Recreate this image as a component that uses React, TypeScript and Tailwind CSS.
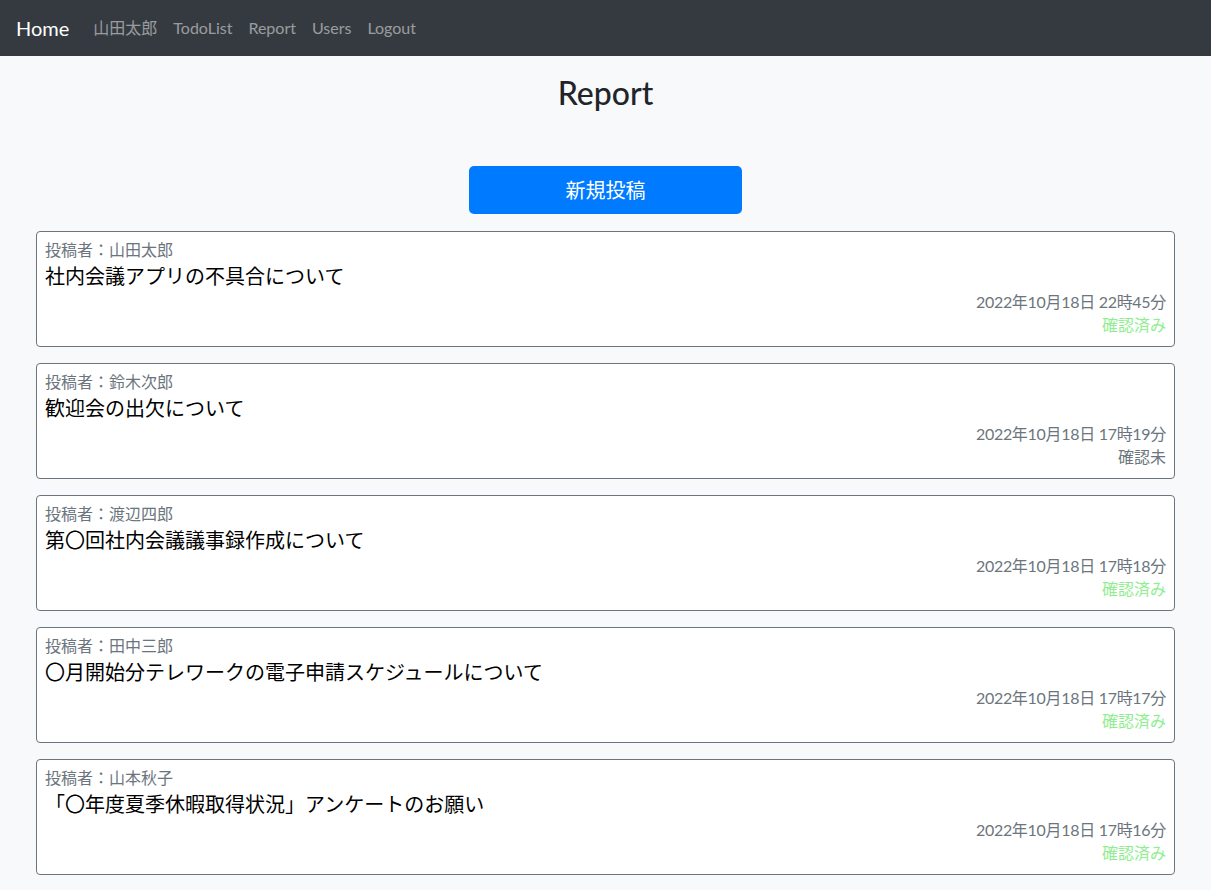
import React from "react";

const FONT = {
  fontFamily: '"Lato", "Noto Sans CJK JP", sans-serif',
};

const REPORTS = [
  {
    author: "山田太郎",
    title: "社内会議アプリの不具合について",
    date: "2022年10月18日 22時45分",
    checked: true,
  },
  {
    author: "鈴木次郎",
    title: "歓迎会の出欠について",
    date: "2022年10月18日 17時19分",
    checked: false,
  },
  {
    author: "渡辺四郎",
    title: "第〇回社内会議議事録作成について",
    date: "2022年10月18日 17時18分",
    checked: true,
  },
  {
    author: "田中三郎",
    title: "〇月開始分テレワークの電子申請スケジュールについて",
    date: "2022年10月18日 17時17分",
    checked: true,
  },
  {
    author: "山本秋子",
    title: "「〇年度夏季休暇取得状況」アンケートのお願い",
    date: "2022年10月18日 17時16分",
    checked: true,
  },
];

const NAV_LINKS = ["山田太郎", "TodoList", "Report", "Users", "Logout"];

const ReportCard = ({
  author,
  title,
  date,
  checked,
}: {
  author: string;
  title: string;
  date: string;
  checked: boolean;
}) => (
  <div className="border border-[#6c757d] rounded-[4px] bg-white px-2 pt-[6px] pb-[9px]">
    <div className="text-base leading-6 text-[#6c757d]">投稿者：{author}</div>
    <div
      className="text-[20px] leading-[28px] text-black"
      style={{ fontFamily: '"Noto Sans CJK JP", sans-serif' }}
    >
      {title}
    </div>
    <div className="text-right text-base leading-[23px] text-[#6c757d] tracking-[-0.3px]">
      {date}
    </div>
    <div
      className={
        checked
          ? "text-right text-base leading-6 text-[#90ee90]"
          : "text-right text-base leading-6 text-[#6c757d]"
      }
    >
      {checked ? "確認済み" : "確認未"}
    </div>
  </div>
);

export default function App() {
  return (
    <div className="min-h-[890px] bg-[#f8f9fa] text-[#212529]" style={FONT}>
      <nav className="h-14 bg-[#343a40] flex items-center px-4">
        <span className="text-[20px] text-white mr-4 leading-[30px]">Home</span>
        {NAV_LINKS.map((link) => (
          <span
            key={link}
            className="px-2 text-base text-[rgba(255,255,255,0.5)]"
          >
            {link}
          </span>
        ))}
      </nav>
      <main className="flex flex-col items-center pt-[18px]">
        <h2 className="text-[32px] font-medium leading-[38px] text-[#212529]">
          Report
        </h2>
        <button className="mt-[54px] w-[273px] h-[48px] rounded-[5px] bg-[#007bff] text-white text-[20px]">
          新規投稿
        </button>
        <div className="self-stretch mx-9 mt-[17px] flex flex-col gap-4 pb-4">
          {REPORTS.map((r) => (
            <ReportCard key={r.title} {...r} />
          ))}
        </div>
      </main>
    </div>
  );
}
